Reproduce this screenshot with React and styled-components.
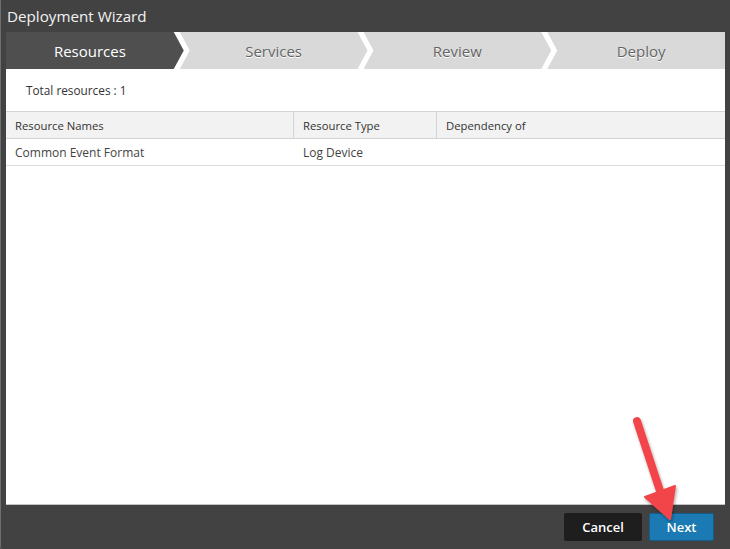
import React from "react";
import styled, { createGlobalStyle } from "styled-components";

const GlobalStyle = createGlobalStyle`
  html, body {
    margin: 0;
    padding: 0;
    background: #424242;
  }
  * { box-sizing: border-box; }
`;

const steps = ["Resources", "Services", "Review", "Deploy"];

const columns = [
  { label: "Resource Names", width: 288 },
  { label: "Resource Type", width: 143 },
  { label: "Dependency of" },
];

const rows = [["Common Event Format", "Log Device", ""]];

const App = () => {
  return (
    <>
      <GlobalStyle />
      <Dialog>
        <TitleBar>Deployment Wizard</TitleBar>
        <StepBar>
          {steps.map((s, i) => (
            <Step
              key={s}
              $active={i === 0}
              $first={i === 0}
              $last={i === steps.length - 1}
            >
              {s}
            </Step>
          ))}
        </StepBar>
        <Content>
          <Summary>Total resources : 1</Summary>
          <Table>
            <HeadRow>
              {columns.map((c) => (
                <HeadCell key={c.label} $width={c.width}>
                  {c.label}
                </HeadCell>
              ))}
            </HeadRow>
            {rows.map((r, ri) => (
              <Row key={ri}>
                {r.map((v, ci) => (
                  <Cell key={ci} $width={columns[ci].width}>
                    {v}
                  </Cell>
                ))}
              </Row>
            ))}
          </Table>
        </Content>
        <Footer>
          <CancelButton>Cancel</CancelButton>
          <NextButton>Next</NextButton>
        </Footer>
        <Arrow viewBox="0 0 730 549">
          <defs>
            <filter id="shadow" x="-20%" y="-20%" width="140%" height="140%">
              <feDropShadow dx="1" dy="2" stdDeviation="1.5" floodColor="#000" floodOpacity="0.35" />
            </filter>
          </defs>
          <g filter="url(#shadow)" fill="#f2454a" stroke="#f2454a">
            <line x1="637" y1="421" x2="661" y2="494" strokeWidth="8" strokeLinecap="round" />
            <polygon points="645,497 675,486 670,519" strokeWidth="2" strokeLinejoin="round" />
          </g>
        </Arrow>
      </Dialog>
    </>
  );
};

const Dialog = styled.div`
  position: relative;
  width: 730px;
  height: 549px;
  display: flex;
  flex-direction: column;
  background: #424242;
  border-left: 1px solid #6e6e6e;
  border-bottom-left-radius: 3px;
  padding: 0 5px;
  font-family: "Open Sans", "Noto Sans", sans-serif;
  overflow: hidden;
`;

const TitleBar = styled.div`
  height: 32px;
  line-height: 32px;
  padding-left: 1px;
  font-size: 15.2px;
  color: #f2f2f2;
`;

const StepBar = styled.div`
  display: flex;
  height: 37px;
  background: #fff;
`;

const Step = styled.div`
  flex: 1;
  display: flex;
  align-items: center;
  justify-content: center;
  margin-left: ${(p) => (p.$first ? "0" : "-4px")};
  padding-left: ${(p) => (p.$first ? "0" : "10px")};
  padding-right: ${(p) => (p.$last ? "0" : "10px")};
  font-size: 15px;
  background: ${(p) => (p.$active ? "#4f4f4f" : "#d9d9d9")};
  color: ${(p) => (p.$active ? "#ffffff" : "#646464")};
  text-shadow: ${(p) => (p.$active ? "none" : "0 1px 0 #fff")};
  clip-path: ${(p) =>
    p.$first
      ? "polygon(0 0, calc(100% - 10px) 0, 100% 50%, calc(100% - 10px) 100%, 0 100%)"
      : p.$last
      ? "polygon(0 0, 100% 0, 100% 100%, 0 100%, 10px 50%)"
      : "polygon(0 0, calc(100% - 10px) 0, 100% 50%, calc(100% - 10px) 100%, 0 100%, 10px 50%)"};
`;

const Content = styled.div`
  flex: 1;
  background: #fff;
  border-bottom: 1px solid #c4c4c4;
`;

const Summary = styled.div`
  height: 42px;
  display: flex;
  align-items: center;
  padding-left: 20px;
  font-size: 11.8px;
  color: #333;
`;

const Table = styled.div`
  display: flex;
  flex-direction: column;
  font-size: 12px;
`;

const HeadRow = styled.div`
  display: flex;
  height: 28px;
  background: #f2f2f2;
  border-top: 1px solid #d4d4d4;
  border-bottom: 1px solid #d4d4d4;
`;

const HeadCell = styled.div`
  ${(p) => (p.$width ? `width: ${p.$width}px;` : "flex: 1;")}
  display: flex;
  align-items: center;
  padding-left: 9px;
  font-size: 11.3px;
  color: #333;
  border-right: ${(p) => (p.$width ? "1px solid #d4d4d4" : "none")};
`;

const Row = styled.div`
  display: flex;
  height: 27px;
  border-bottom: 1px solid #dcdcdc;
`;

const Cell = styled.div`
  ${(p) => (p.$width ? `width: ${p.$width}px;` : "flex: 1;")}
  display: flex;
  align-items: center;
  padding-left: 9px;
  color: #444;
`;

const Footer = styled.div`
  height: 44px;
  display: flex;
  align-items: center;
  justify-content: flex-end;
  gap: 7px;
  padding-right: 11px;
`;

const CancelButton = styled.button`
  width: 78px;
  height: 28px;
  border: none;
  border-radius: 2px;
  background: #1e1e1e;
  color: #fff;
  font-family: "Open Sans", "Noto Sans", sans-serif;
  font-size: 13px;
  font-weight: 600;
  cursor: pointer;
`;

const NextButton = styled(CancelButton)`
  width: 65px;
  background: #1b7ab3;
  border: 1px solid #135d8c;
`;

const Arrow = styled.svg`
  position: absolute;
  left: -1px;
  top: 0;
  width: 730px;
  height: 549px;
  pointer-events: none;
`;

export default App;
